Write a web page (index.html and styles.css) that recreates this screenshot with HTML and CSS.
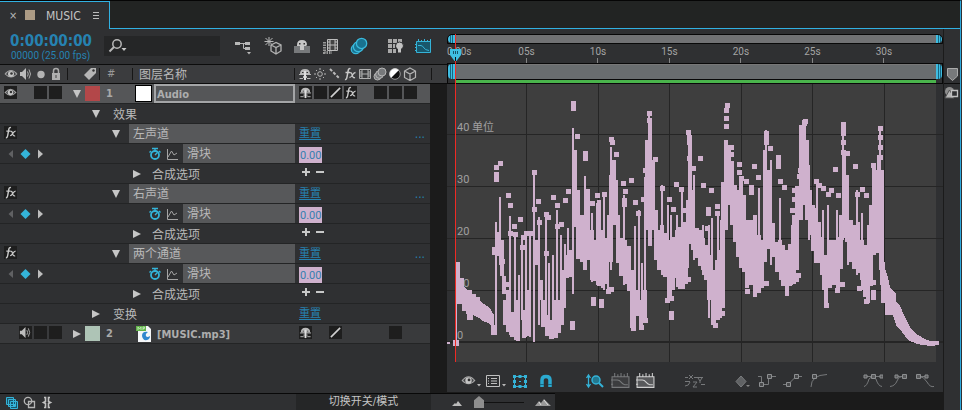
FILE: index.html
```
<!DOCTYPE html>
<html lang="zh-CN">
<head>
<meta charset="utf-8">
<title>MUSIC</title>
<link rel="stylesheet" href="styles.css">
</head>
<body>
<svg class="defs" aria-hidden="true">
  <symbol id="eye" viewBox="0 0 14 14"><path d="M0.5 7Q7 -1 13.5 7Q7 14 0.5 7Z" fill="#a9a9a9"/><path d="M2 7.300Q4 4 7 4Q10 4 12 7.300Q7 12 2 7.300Z" fill="#454648"/><circle cx="7" cy="7" r="3" fill="#c4c4c4"/><circle cx="7.500" cy="6.500" r="1.300" fill="#333"/></symbol>
  <symbol id="speaker" viewBox="0 0 14 14"><path d="M1 5H3L7 1V13L3 9H1Z" fill="#bdbdbd"/><path d="M8.500 4.500Q10 7 8.500 9.500M10 2.500Q13 7 10 11.500" fill="none" stroke="#b0b0b0"/></symbol>
  <symbol id="shy" viewBox="0 0 14 14"><path d="M2 7Q2 2 7 2Q12 2 12 7Z" fill="#b9b9b9"/><path d="M1 7.500H13M1.500 11.500H5M9 11.500H12.500" stroke="#b9b9b9" fill="none"/><path d="M6 4H8V13H6Z" fill="#dedede"/><path d="M4 5H5.500V6H4ZM8.500 5H10V6H8.500Z" fill="#333"/><path d="M5 9H6V11H5ZM8 9H9V11H8Z" fill="#b9b9b9"/></symbol>
  <symbol id="fx" viewBox="0 0 14 14"><path d="M2 12.500Q3.500 13 4 10L5.200 3.500Q5.600 1.200 7.500 1.700M2.500 5.500H7" fill="none" stroke="#c9c9c9" stroke-width="1.500"/><path d="M7 6Q8.500 5 9.200 8Q10 11.500 12 10.500M12.500 5.500Q11 5.500 9.500 8T6.500 10.500" fill="none" stroke="#c9c9c9" stroke-width="1.300"/></symbol>
  <symbol id="slash" viewBox="0 0 14 14"><path d="M2 12L12 2" stroke="#d0d0d0" stroke-width="1.700"/></symbol>
  <symbol id="film" viewBox="0 0 14 14"><path d="M1.500 2.500H12.500V11.500H1.500ZM4 2V12M10 2V12M4 7H10M1.500 5H4M1.500 7H4M1.500 9H4M10 5H12.500M10 7H12.500M10 9H12.500" fill="none" stroke="#b0b0b0"/></symbol>
  <symbol id="blur" viewBox="0 0 14 14"><circle cx="4.500" cy="9.500" r="3.500"/><circle cx="6.500" cy="7.500" r="3.900"/><circle cx="9" cy="5" r="4"/></symbol>
  <symbol id="cube" viewBox="0 0 14 14"><path d="M7 1L12.500 4V10.500L7 13.500L1.500 10.500V4ZM1.500 4L7 7L12.500 4M7 7V13.500" fill="none" stroke="#b5b5b5" stroke-width="1.200"/></symbol>
  <symbol id="down" viewBox="0 0 10 10"><path d="M1 1H9L5 9Z" fill="#c6c6c6"/></symbol>
  <symbol id="right" viewBox="0 0 10 10"><path d="M1 1V9L9 5Z" fill="#c6c6c6"/></symbol>
  <symbol id="keys" viewBox="0 0 40 14"><path d="M5 3V11L0.500 7Z" fill="#606163"/><path d="M17.500 2L22.500 7L17.500 12L12.500 7Z" fill="#34b3d8"/><path d="M30 2.500V11.500L35 7Z" fill="#bdbdbd"/></symbol>
  <symbol id="watch" viewBox="0 0 12 14"><circle cx="6" cy="8" r="4" fill="none" stroke="#34b3d8" stroke-width="1.800"/><path d="M3 1.500H9M6 2V4M6 8L8.500 5.500M10 4L11.500 5.500M2 4L0.500 5.500" stroke="#34b3d8" stroke-width="1.400" fill="none"/></symbol>
  <symbol id="curve" viewBox="0 0 12 14"><path d="M1.500 2V12.500H12M2 10L5.500 4L8 8L11 6" fill="none" stroke="#a4a4a4"/></symbol>
  <symbol id="graphset" viewBox="0 0 18 16"><path d="M1 4.500H17V14.500H1ZM3.500 1V4M6.500 2V4M9.500 1V4M12.500 2V4M15.500 1V4M0 7.500H2M0 11.500H2"/><path d="M2 7.500H6Q8 7.500 9.500 9.500T13 12H16"/></symbol>
</svg>

<div class="app">
  <header class="tabs">
    <div class="tab"><button class="close" aria-label="关闭">×</button><span class="chip"></span><span class="tab-name">MUSIC</span><button class="menu" aria-label="菜单"><svg width="8" height="10"><path d="M1 1.500H7M1 4.500H7M1 7.500H7" stroke="#bbb"/></svg></button></div>
    <div class="tab-rest"></div>
  </header>

  <main class="main">
    <section class="layers">
      <div class="tools">
        <div class="clock"><div class="time">0:00:00:00</div><div class="frames">00000 (25.00 fps)</div></div>
        <label class="search"><svg width="20" height="16"><circle cx="9" cy="6" r="4.200" fill="none" stroke="#b8b8b8" stroke-width="1.500"/><path d="M6 9L1.500 13.500" stroke="#b8b8b8" stroke-width="2"/><path d="M13.500 10H18.500L16 13Z" fill="#c8c8c8"/></svg><input type="text" aria-label="搜索"></label>
        <div class="tool-icons">
          <button aria-label="流程图"><svg width="18" height="18"><path d="M1 6.500H6M6 6.500H12M9.500 6.500V11.500H12" stroke="#b8b8b8" fill="none"/><path d="M1 5H6V8H1ZM11 5H16V8H11ZM11 10H16V13H11Z" fill="#b8b8b8"/><path d="M13 15H17L15 17.500Z" fill="#b8b8b8"/></svg></button>
          <button aria-label="草图 3D"><svg width="20" height="18"><path d="M6 0V9M1.500 4.500H10.500M2.500 1L9.500 8M9.500 1L2.500 8" stroke="#b8b8b8" fill="none"/><path d="M8 8L13 5.500L18 8V14L13 17L8 14ZM8 8L13 10.500L18 8M13 10.500V17" fill="#303133" stroke="#b2b2b2" stroke-width="1.300"/></svg></button>
          <button aria-label="隐藏图层"><svg width="18" height="18"><path d="M1 9H17V16H1Z" fill="#77797b"/><path d="M4 8Q4 3 9 3Q14 3 14 8L13 9H11V13H7V9H4Z" fill="#c7c7c7"/><path d="M6 6H7.500V7.500H6ZM10.500 6H12V7.500H10.500Z" fill="#333"/></svg></button>
          <button aria-label="帧混合"><svg width="18" height="18"><path d="M2.500 5V15.500H10" stroke="#999" fill="none" stroke-width="3" stroke-dasharray="1.500 1"/><path d="M5.500 2.500H15.500V13.500H5.500ZM8 2V14M13 2V14M8 8H13M5.500 5H8M5.500 8H8M5.500 11H8M13 5H15.500M13 8H15.500M13 11H15.500" stroke="#bdbdbd" fill="#444"/></svg></button>
          <button aria-label="运动模糊"><svg class="blue-blur" width="18" height="18"><use href="#blur" width="18" height="18"/></svg></button>
          <button class="gap" aria-label="变化"><svg width="18" height="18"><path d="M1 2H5V6H1ZM6 2H10V6H6ZM11 2H15V5H11ZM1 7H5V11H1ZM6 7H8V11H6ZM1 12H5V16H1ZM6 12H9V16H6Z" fill="#a9a9a9"/><path d="M12.500 5Q16.500 5 16.500 9Q16 11 14.500 12V16H10.500V12Q8.500 11 8.500 9Q8.500 5 12.500 5Z" fill="#c3c3c3" stroke="#303133"/></svg></button>
          <button aria-label="图表编辑器"><svg width="18" height="18"><path d="M1.500 4.500H15.500V15.500H1.500Z" fill="#19576b" stroke="#34b3d8"/><path d="M3.500 2V5M6.500 3V5M9.500 2V5M12.500 3V5M15.500 2V5M0 7.500H2M0 10.500H2M0 13.500H2M3 8.500H6Q8 9 9 11T14 13.500" fill="none" stroke="#34b3d8"/></svg></button>
        </div>
      </div>

      <div class="cols">
        <div class="av"><svg><use href="#eye"/></svg><svg><use href="#speaker"/></svg><svg viewBox="0 0 14 14"><circle cx="7" cy="7.500" r="3.700" fill="#b4b4b4"/></svg><svg viewBox="0 0 14 14"><path d="M4.500 6V4Q4.500 1.500 7 1.500Q9.500 1.500 9.500 4V6" fill="none" stroke="#aaa" stroke-width="1.500"/><path d="M3 6H11V13H3Z" fill="#b0b0b0"/><path d="M6.500 8H7.500V11H6.500Z" fill="#444"/></svg></div>
        <div class="col tag"><svg viewBox="0 0 14 14"><path d="M1 8L8 1H13V6L6 13Z" fill="#b5b5b5"/><circle cx="10.500" cy="3.500" r="1.200" fill="#333"/></svg></div>
        <div class="col num">#</div>
        <div class="col title"><span class="label">图层名称</span></div>
        <div class="col switches"><svg><use href="#shy"/></svg><svg viewBox="0 0 14 14"><circle cx="7" cy="7" r="2.300" fill="none" stroke="#b5b5b5"/><path d="M7 1V3M7 11V13M1 7H3M11 7H13M3 3L4 4M10 10L11 11M11 3L10 4M4 10L3 11" stroke="#b5b5b5"/></svg><svg viewBox="0 0 14 14"><path d="M2 2L12 12" stroke="#bbb" stroke-width="2" stroke-dasharray="3 1.700"/></svg><svg><use href="#fx"/></svg><svg><use href="#film"/></svg><svg class="gray-blur"><use href="#blur"/></svg><svg viewBox="0 0 14 14"><circle cx="7" cy="7" r="5.500" fill="#111"/><path d="M3 11A5.500 5.500 0 0 1 11 3Z" fill="#fff"/><circle cx="7" cy="7" r="5.300" fill="none" stroke="#ccc" stroke-width=".7"/></svg><svg><use href="#cube"/></svg></div>
        <div class="col end"></div>
      </div>

      <div class="list">
        <div class="rows">
          <div class="row layer selected">
            <div class="av"><i class="box"><svg><use href="#eye"/></svg></i><i></i><i class="box"></i><i class="box"></i></div>
            <div class="name"><svg class="twirl"><use href="#down"/></svg><span class="swatch red"></span><b class="index">1</b><span class="solid"></span><b class="layer-name">Audio</b></div>
            <div class="sw"><i class="box"><svg><use href="#shy"/></svg></i><i class="box"></i><i class="box"><svg><use href="#slash"/></svg></i><i class="box"><svg><use href="#fx"/></svg></i><i></i><i class="box"></i><i class="box"></i><i class="box"></i></div>
          </div>
          <div class="row"><div class="av"></div><div class="name group"><svg class="twirl"><use href="#down"/></svg><span class="label">效果</span></div><div class="sw"></div></div>

          <div class="row"><div class="av"><i class="box"><svg><use href="#fx"/></svg></i></div><div class="name effect"><svg class="twirl"><use href="#down"/></svg><span class="picked">左声道</span></div><div class="sw"><a href="#reset">重置</a><a class="more" href="#more">...</a></div></div>
          <div class="row"><div class="keys"><svg><use href="#keys"/></svg></div><div class="name prop"><svg class="mini"><use href="#watch"/></svg><svg class="mini"><use href="#curve"/></svg><span class="picked">滑块</span></div><div class="sw"><span class="value">0.00</span></div></div>
          <div class="row"><div class="av"></div><div class="name option"><svg class="twirl"><use href="#right"/></svg><span class="label">合成选项</span></div><div class="sw"><button class="pm" aria-label="添加"><svg viewBox="0 0 10 10"><path d="M5 1V9M1 5H9" stroke="#c8c8c8" stroke-width="2"/></svg></button><button class="pm" aria-label="移除"><svg viewBox="0 0 10 10"><path d="M1 5H9" stroke="#c8c8c8" stroke-width="2"/></svg></button></div></div>

          <div class="row"><div class="av"><i class="box"><svg><use href="#fx"/></svg></i></div><div class="name effect"><svg class="twirl"><use href="#down"/></svg><span class="picked">右声道</span></div><div class="sw"><a href="#reset">重置</a><a class="more" href="#more">...</a></div></div>
          <div class="row"><div class="keys"><svg><use href="#keys"/></svg></div><div class="name prop"><svg class="mini"><use href="#watch"/></svg><svg class="mini"><use href="#curve"/></svg><span class="picked">滑块</span></div><div class="sw"><span class="value">0.00</span></div></div>
          <div class="row"><div class="av"></div><div class="name option"><svg class="twirl"><use href="#right"/></svg><span class="label">合成选项</span></div><div class="sw"><button class="pm" aria-label="添加"><svg viewBox="0 0 10 10"><path d="M5 1V9M1 5H9" stroke="#c8c8c8" stroke-width="2"/></svg></button><button class="pm" aria-label="移除"><svg viewBox="0 0 10 10"><path d="M1 5H9" stroke="#c8c8c8" stroke-width="2"/></svg></button></div></div>

          <div class="row"><div class="av"><i class="box"><svg><use href="#fx"/></svg></i></div><div class="name effect"><svg class="twirl"><use href="#down"/></svg><span class="picked">两个通道</span></div><div class="sw"><a href="#reset">重置</a><a class="more" href="#more">...</a></div></div>
          <div class="row"><div class="keys"><svg><use href="#keys"/></svg></div><div class="name prop"><svg class="mini"><use href="#watch"/></svg><svg class="mini"><use href="#curve"/></svg><span class="picked">滑块</span></div><div class="sw"><span class="value">0.00</span></div></div>
          <div class="row"><div class="av"></div><div class="name option"><svg class="twirl"><use href="#right"/></svg><span class="label">合成选项</span></div><div class="sw"><button class="pm" aria-label="添加"><svg viewBox="0 0 10 10"><path d="M5 1V9M1 5H9" stroke="#c8c8c8" stroke-width="2"/></svg></button><button class="pm" aria-label="移除"><svg viewBox="0 0 10 10"><path d="M1 5H9" stroke="#c8c8c8" stroke-width="2"/></svg></button></div></div>

          <div class="row"><div class="av"></div><div class="name group"><svg class="twirl"><use href="#right"/></svg><span class="label">变换</span></div><div class="sw"><a href="#reset">重置</a></div></div>
          <div class="row layer plain">
            <div class="av"><i></i><i class="box"><svg><use href="#speaker"/></svg></i><i class="box"></i><i class="box"></i></div>
            <div class="name"><svg class="twirl"><use href="#right"/></svg><span class="swatch green"></span><b class="index">2</b><svg class="file" viewBox="0 0 17 18"><path d="M3 1H13L16 4V17H3Z" fill="#f4f6f8"/><path d="M1 1H11V6H1Z" fill="#63b54b"/><path d="M3 5V2L4.500 4L6 2V5M8 5V2H9.500V3.500H8" stroke="#c8ecc0" fill="none" stroke-width=".8"/><path d="M13 7Q7 6 7 11Q8 16 12 15Q15 14 15 11Q12 13 11 11Q10 9 13 7Z" fill="#3087cf"/></svg><b class="layer-name">[MUSIC.mp3]</b></div>
            <div class="sw"><i class="box"><svg><use href="#shy"/></svg></i><i></i><i class="box"><svg><use href="#slash"/></svg></i><i></i><i></i><i></i><i class="box"></i></div>
          </div>
        </div>
        <div class="gutter"></div>
      </div>
    </section>

    <section class="graph">
      <div class="nav"><span class="handle start"></span><span class="bar"></span><span class="handle stop"></span></div>
      <div class="ruler"><span class="first">0:00s</span><span>05s</span><span>10s</span><span>15s</span><span>20s</span><span>25s</span><span>30s</span></div>
      <div class="work"><span class="handle start"></span><span class="bar"></span><span class="handle stop"></span></div>
      <div class="plot">
        <div class="scale"><span>40 单位</span><span>30</span><span>20</span><span>10</span><span>0</span></div>
        <svg class="wave" viewBox="447 84 496 278" preserveAspectRatio="none" shape-rendering="crispEdges">
          <path class="grid" d="M526.500 84V362M598.500 84V362M669.500 84V362M741.500 84V362M812.500 84V362M884.500 84V362M447 134.500H943M447 186.500H943M447 238.500H943M447 290.500H943"/>
          <path class="zero" d="M447 342H943"/>
          <path class="fill" d="M455 342V262H460V278H464V286L467 290H472V294H476V297H480V301L487 306L491 310L494 315V325H497V335H491V326L488 323L483 321L479 318L473 315V320H467V316L466 311H462V304H457V342ZM453 340H459V346H453ZM447 342H450V344H447Z"/>
          <path class="thin" d="M496 222V330M500 197V265M510 216V335M515 232V340M519 275V335M522 237V320M526 231V337M530 233V337M534 170V342M539 217V325M546 215V335M549 263V336M553 255V339M557 210V338M561 235V325M565 244V308M568 228V278M573 128V294M585 176V270M592 213V282M597 203V285M604 195V290M608 215V292M611 147V270M617 180V260M624 195V285M635 226V328M639 210V315M642 263V325M645 177V320M649 113V246M662 185V275M668 205V301M671 215V298M677 215V285M682 187V288M687 200V280M694 175V260M703 225V275M709 225V318M712 218V325M718 215V320M721 220V310M759 188V290M766 130V250M771 160V265M780 198V280M792 225V285M809 165V240M817 180V260M823 210V290M828 205V285M837 210V290M843 122V240M848 215V265M857 190V275M862 213V290M868 225V302M880 127V270"/>
          <path class="thick" d="M494 247V255M498 232V256M502 240V276M504 276V294M505 300V325M508 290V332M512 312V337M518 300V341M524 310V338M529 290V336M537 240V265M541 280V300M543 300V327M547 315V336M551 320V339M555 300V338M559 300V333M562 285V325M564 270V302M567 255V278M571 250V277M575 150V227M578 190V259M582 215V262M585 220V270M588 190V260M592 230V280M595 240V281M599 200V286M603 230V288M607 238V284M611 175V262M614 160V225M618 215V263M621 238V276M625 240V284M629 246V291M632 270V328M638 290V316M641 300V327M645 290V322M647 140V230M650 120V246M653 160V230M656 210V260M659 230V270M662 225V270M665 233V277M669 240V299M673 237V290M677 230V278M680 227V289M684 222V281M687 225V268M690 145V244M693 190V250M697 228V258M700 230V266M703 238V270M706 245V280M709 255V300M713 270V325M717 260V317M720 250V318M723 182V308M726 140V230M729 145V205M732 165V225M735 185V242M738 190V257M741 180V268M744 195V272M747 220V288M751 220V285M755 215V297M759 235V293M762 240V288M765 150V262M769 170V249M773 223V257M777 242V272M780 240V268M783 245V286M787 250V296M790 244V286M794 215V284M797 190V270M801 125V220M804 120V205M807 140V220M810 190V235M813 205V251M816 208V263M819 222V263M822 237V275M826 255V306M830 240V288M834 240V285M838 237V292M841 215V269M844 150V238M847 175V242M851 220V262M854 225V269M858 222V273M862 240V280M865 245V297M868 245V303M871 205V286M874 165V255M877 170V253M879 155V200M882 170V285"/>
          <path class="fill" d="M881 255H884L885 268L888 277L890 287L896 294V302L900 306L905 317L910 327L915 333L923 338L930 341H939V345L930 346L917 344L908 340L902 332L897 327L893 315H885V303H881Z"/>
          <path class="dots" d="M497.500 163h5M493.500 167h5M493.500 174h5M493.500 179h5M505.500 195h5M507.500 205h5M531.500 172h5M535.500 201h5M550.500 197h5M554.500 205h5M562.500 200h5M565.500 191h5M570.500 103h5M570.500 108h5M574.500 136h5M582.500 153h5M582.500 158h5M584.500 191h5M589.500 203h5M594.500 195h5M601.500 194h5M608.500 139h5M609.500 142h5M613.500 154h5M620.500 183h5M622.500 191h5M621.500 200h5M621.500 204h5M628.500 180h5M632.500 202h5M635.500 213h5M640.500 199h5M642.500 170h5M646.500 113h5M646.500 120h5M652.500 159h5M659.500 188h5M666.500 199h5M670.500 209h5M680.500 210h5M673.500 184h5M678.500 189h5M685.500 132h5M686.500 137h5M686.500 142h5M686.500 158h5M690.500 168h5M697.500 158h5M700.500 185h5M708.500 190h5M705.500 209h5M705.500 213h5M714.500 206h5M714.500 213h5M704.500 228h5M724.500 105h5M723.500 110h5M723.500 118h5M723.500 126h5M728.500 147h5M728.500 154h5M728.500 163h5M736.500 164h5M736.500 172h5M738.500 178h5M743.500 181h5M748.500 187h5M748.500 192h5M751.500 166h5M755.500 177h5M763.500 133h5M763.500 138h5M763.500 142h5M767.500 148h5M775.500 157h5M775.500 162h5M775.500 166h5M777.500 181h5M781.500 187h5M802.500 121h5M801.500 123h5M797.500 170h5M796.500 176h5M794.500 188h5M791.500 190h5M791.500 199h5M789.500 210h5M813.500 181h5M816.500 185h5M820.500 188h5M828.500 190h5M825.500 194h5M832.500 169h5M835.500 195h5M840.500 124h5M840.500 129h5M840.500 133h5M840.500 142h5M840.500 152h5M844.500 153h5M852.500 166h5M859.500 189h5M854.500 194h5M863.500 195h5M870.500 165h5M877.500 128h5M877.500 137h5M877.500 147h5M877.500 157h5M507.500 233h5M517.500 219h5M511.500 226h5M512.500 234h5M520.500 237h5M523.500 233h5M527.500 233h5M519.500 247h5M531.500 209h5M536.500 222h5M543.500 214h5M545.500 217h5M543.500 253h5M558.500 224h5M554.500 226h5M499.500 261h5M501.500 284h5M505.500 284h5M569.500 323h5M569.500 327h5M668.500 313h5M668.500 317h5M608.500 289h5M605.500 291h5M590.500 299h5M590.500 303h5M598.500 301h5M598.500 305h5M630.500 328h5M638.500 327h5M642.500 320h5M664.500 300h5M668.500 298h5M675.500 284h5M682.500 281h5M685.500 279h5M679.500 286h5M710.500 320h5M712.500 325h5M719.500 313h5M714.500 317h5M744.500 291h5M763.500 283h5M745.500 280h5M795.500 275h5M793.500 279h5M823.500 305h5M829.500 282h5M839.500 284h5M834.500 290h5M863.500 301h5M870.500 292h5M870.500 297h5M870.500 282h5M856.500 288h5"/>
        </svg>
      </div>
      <div class="graph-tools">
        <button aria-label="显示属性"><svg width="22" height="18"><use href="#eye" width="15" height="15" y="1"/><path d="M16 12H20L18 14.500Z" fill="#b8b8b8"/></svg></button>
        <button aria-label="图表类型"><svg width="22" height="18"><path d="M1.500 3.500H14.500V14.500H1.500Z" fill="none" stroke="#c0c0c0"/><path d="M3 6.500H4M6 6.500H12M3 9H4M6 9H12M3 11.500H4M6 11.500H12" stroke="#c0c0c0"/><path d="M17 12H21L19 14.500Z" fill="#b8b8b8"/></svg></button>
        <button class="s1" aria-label="变换框"><svg width="18" height="18"><path d="M3.500 4.500H14.500V14.500H3.500Z" fill="none" stroke="#34b3d8"/><path d="M2 3H5V6H2ZM7.500 3H10.500V6H7.500ZM13 3H16V6H13ZM2 8H5V11H2ZM13 8H16V11H13ZM2 13H5V16H2ZM7.500 13H10.500V16H7.500ZM13 13H16V16H13ZM8 9H10V10H8Z" fill="#34b3d8"/></svg></button>
        <button class="s2" aria-label="对齐"><svg width="18" height="18"><path d="M5 15V8Q5 4.500 9 4.500Q13 4.500 13 8V15" fill="none" stroke="#2ba9cf" stroke-width="3.500"/><path d="M3 12.500H7M11 12.500H15" stroke="#176782"/></svg></button>
        <button class="s3" aria-label="自动缩放"><svg width="20" height="18"><path d="M3.500 4V14M1.500 6L3.500 3L5.500 6M1.500 12L3.500 15L5.500 12" fill="none" stroke="#34b3d8" stroke-width="1.300"/><circle cx="11" cy="8" r="4" fill="#237991" stroke="#34b3d8" stroke-width="1.500"/><path d="M14 11L18 15" stroke="#34b3d8" stroke-width="2"/></svg></button>
        <button class="s4" aria-label="适合选择"><svg class="graph-dim" width="19" height="17"><use href="#graphset"/></svg></button>
        <button class="s4" aria-label="适合全部"><svg class="graph-lit" width="19" height="17"><use href="#graphset"/></svg></button>
        <button class="s5" aria-label="单独尺寸"><svg width="20" height="18"><path d="M4 3L8 7M8 3L4 7M13 6L15 9L17 6M15 9V11M8 10H12L8 15H12M0 5.500H3M9 5.500H18M0 9.500H5M16 12.500H20M0 14Q4 14 5 10" fill="none" stroke="#77797b"/></svg></button>
        <button class="s6" aria-label="关键帧"><svg width="16" height="18"><path d="M6 4L11 9.500L6 15L1 9.500Z" fill="#606264" stroke="#7b7d7f"/><path d="M11 13H15L13 15Z" fill="#888"/></svg></button>
        <button class="s4" aria-label="定格"><svg width="20" height="18"><path d="M1 4.500H4.500V12.500H11.500V4.500H19" fill="none" stroke="#77797b"/><path d="M2.500 10.500H6.500V14.500H2.500ZM10.500 2.500H14.500V6.500H10.500Z" fill="#48494b" stroke="#8d8f91"/></svg></button>
        <button class="s4" aria-label="线性"><svg width="20" height="18"><path d="M0 12.500H5L13 4.500H19" fill="none" stroke="#77797b"/><path d="M3.500 10.500H7.500V14.500H3.500ZM11.500 2.500H15.500V6.500H11.500Z" fill="#48494b" stroke="#8d8f91"/></svg></button>
        <button class="s4" aria-label="自动贝塞尔曲线"><svg width="20" height="18"><path d="M2 15Q2 3 18 2.500" fill="none" stroke="#77797b"/><path d="M3.500 2.500H7.500V6.500H3.500Z" fill="#48494b" stroke="#8d8f91"/></svg></button>
        <button class="s7" aria-label="缓动"><svg width="20" height="18"><path d="M1 14.500Q4 14 6 7L9 4.500L13 7Q15 14 19 14.500M1 4.500H19" fill="none" stroke="#77797b"/><path d="M8.500 2.500H12.500V6.500H8.500ZM1 3H4V6H1ZM17 3H20V6H17Z" fill="#58595b" stroke="#8d8f91"/></svg></button>
        <button class="s4" aria-label="缓入"><svg width="20" height="18"><path d="M1 14.500Q6 14 8 9T15 4.500H7" fill="none" stroke="#77797b"/><path d="M13.500 2.500H17.500V6.500H13.500ZM6 3H9V6H6Z" fill="#58595b" stroke="#8d8f91"/></svg></button>
        <button class="s4" aria-label="缓出"><svg width="20" height="18"><path d="M13 4.500H4Q9 4.500 12 10T19 14.500" fill="none" stroke="#77797b"/><path d="M1.500 2.500H5.500V6.500H1.500ZM10 3H13V6H10Z" fill="#58595b" stroke="#8d8f91"/></svg></button>
      </div>
      <div class="playhead"><svg width="13" height="14"><path d="M1 1H12V7L7.500 13H5.500L1 7Z" fill="#3fc0e2"/><path d="M4.500 3V6M6.500 3V6M8.500 3V6" stroke="#17556a"/><path d="M6.500 9V13" stroke="#111"/></svg></div>
    </section>

    <aside class="side">
      <button class="bin" aria-label="标记"><svg width="13" height="15"><path d="M1.500 1.500H11.500V9L6.500 13.500L1.500 9Z" fill="#77797b" stroke="#aaa"/></svg></button>
      <button class="comp" aria-label="合成"><svg width="15" height="14"><circle cx="5.500" cy="5.500" r="4.500" fill="#8d8d8d"/><path d="M1 12L5.500 4L10 12Z" fill="#b5b5b5" stroke="#555"/><path d="M7.500 4.500H13.500V10.500H7.500Z" fill="#303133" stroke="#c0c0c0" stroke-width="1.300"/></svg></button>
    </aside>
  </main>

  <footer class="foot">
    <div class="panes">
      <button aria-label="图层开关"><svg width="14" height="14"><path d="M1.500 1.500H8.500V8.500H1.500ZM3.500 3.500H10.500V10.500H3.500ZM5.500 5.500H12.500V12.500H5.500Z" fill="#17556a" stroke="#34b3d8"/><path d="M8 8H10V10H8Z" fill="#34b3d8"/></svg></button>
      <button aria-label="传递控制"><svg width="14" height="14"><circle cx="5" cy="5" r="3.700" fill="none" stroke="#b5b5b5" stroke-width="1.300"/><path d="M5.500 5.500H11.500V11.500H5.500Z" fill="none" stroke="#b5b5b5" stroke-width="1.300"/></svg></button>
      <button aria-label="入出点"><svg width="14" height="14"><path d="M3 1.500H4.500V5.500L2.500 6.500L4.500 7.500V11.500H3M9 1.500H7.500V5.500L9.500 6.500L7.500 7.500V11.500H9" fill="none" stroke="#c2c2c2" stroke-width="1.600"/></svg></button>
    </div>
    <button class="toggle">切换开关/模式</button>
    <div class="zoom">
      <svg width="12" height="10"><path d="M1 9L4 6L5 7L7 4L11 9Z" fill="#bbb"/></svg>
      <input type="range" min="0" max="100" value="0" aria-label="缩放">
      <svg width="18" height="10"><path d="M1 9L5 4L7 6L10 2L17 9Z" fill="#999"/><path d="M5 5L7 8M10 3L14 8" stroke="#ddd"/></svg>
    </div>
    <div class="foot-rest"></div>
    <div class="foot-side"></div>
  </footer>
</div>
</body>
</html>
```
FILE: styles.css
```
* { box-sizing: border-box; }
html { background: #2f3032; }
body { margin: 0; color: #b9b9b9; font: 12px/16px "DejaVu Sans Condensed", "Noto Sans CJK SC", sans-serif; }
button { display: block; flex: none; margin: 0; padding: 0; border: 0; background: none; color: inherit; font: inherit; }
svg { display: block; flex: none; }
i { font-style: normal; }
.defs { position: absolute; width: 0; height: 0; }

.app { display: flex; flex-direction: column; min-height: 100vh; background: #2f3032; border-right: 1px solid #2fa9dd; border-top: 1px solid #050505; margin-right: 1px; }

.tabs { display: flex; height: 28px; flex: none; }
.tab { display: flex; align-items: center; width: 110px; border: 1px solid #31b1e2; border-width: 1px 1px 0 0; padding-left: 9px; }
.tab-rest { flex: 1; background: #222423; border-bottom: 1px solid #31b1e2; }
.close { width: 8px; font-size: 11px; }
.chip { width: 10px; height: 10px; margin: 0 11px 2px 8px; background: #ac9b85; }
.tab-name { width: 46px; color: #c4c4c4; }

.main { display: flex; flex: 1; }
.layers { display: flex; flex-direction: column; width: 447px; flex: none; }
.tools { display: flex; height: 36px; border-bottom: 1px solid #0c0c0c; padding-right: 14px; }
.clock { width: 104px; padding: 4px 0 0 10px; color: #2682b1; white-space: nowrap; }
.time { font-size: 15px; line-height: 16px; font-weight: bold; }
.frames { padding-left: 1px; font: 10px/14px Roboto, sans-serif; }
.search { display: flex; align-items: center; width: 116px; height: 20px; margin-top: 7px; padding-left: 4px; background: #252627; }
.search input { width: 80px; border: 0; padding: 0; background: none; color: #ccc; outline: 0; }
.tool-icons { display: flex; align-items: flex-start; flex: 1; justify-content: space-between; padding: 8px 0 0 14px; }
.tool-icons .gap { margin-left: 8px; }
.blue-blur { fill: #19728f; stroke: #3ab9dc; }
.gray-blur { fill: #77797b; stroke: #b5b5b5; }

.cols { display: flex; height: 19px; background: #3b3c3e; border-bottom: 1px solid #0c0c0c; align-items: center; }
.cols svg { width: 14px; height: 14px; }
.av { display: flex; gap: 2px; width: 67px; flex: none; padding-left: 4px; }
.cols .av { gap: 1px; }
.col { display: flex; align-items: center; height: 12px; border-left: 1px solid #161616; }
.tag { width: 32px; padding-left: 15px; }
.num { width: 33px; padding-left: 7px; font-size: 11px; color: #999; }
.title { width: 162px; padding-left: 6px; }
.switches { width: 137px; gap: 1px; padding-left: 3px; }
.end { flex: 1; }

.list { display: flex; flex: 1; }
.rows { flex: 1; }
.gutter { width: 17px; background: #1b1b1b; }
.row { display: grid; grid-template-columns: 67px 1fr 135px; height: 20px; border-bottom: 1px solid #232425; }
.row i { width: 13px; height: 13px; flex: none; margin-top: 2px; }
.row .box { background: #1e1e1e; }
.row i svg { width: 13px; height: 13px; }
.row.selected { background: #555658; }
.row.plain { background: #393a3c; }
.name { display: flex; align-items: center; min-width: 0; }
.twirl { width: 10px; height: 10px; }
.label { padding-top: 2px; }
.layer .name { padding-left: 5px; }
.swatch { width: 15px; height: 15px; margin-left: 3px; }
.red { background: #b34749; }
.green { background: #aec4b6; }
.index { width: 35px; padding-left: 6px; font-size: 11px; color: #a9a9a9; }
.solid { width: 17px; height: 17px; background: #fff; border: 1px solid #000; }
.layer-name { flex: 1; height: 19px; margin-left: 2px; padding-left: 1px; border: 2px solid transparent; font-size: 11px; line-height: 17px; color: #adadad; }
.selected .layer-name { border-color: #a4a5a7; }
.file { width: 17px; height: 18px; }
.sw { display: flex; gap: 2px; padding-left: 4px; }
.sw a { height: 19px; font-size: 11px; line-height: 20px; color: #2682b1; text-underline-offset: 2px; }
.sw .more { margin-left: auto; margin-right: 5px; text-decoration: none; font-size: 12px; }
.group { padding-left: 24px; }
.group .label { padding-left: 12px; }
.effect { padding-left: 44px; }
.effect .picked { margin-left: 8px; }
.prop { padding-left: 82px; gap: 5px; }
.mini { width: 12px; height: 14px; }
.option { padding-left: 65px; }
.option .label { padding-left: 10px; }
.picked { flex: 1; height: 19px; padding-left: 4px; line-height: 21px; background: #57585a; }
.keys { padding: 3px 0 0 8px; }
.keys svg { width: 40px; height: 14px; }
.value { height: 16px; margin-top: 3px; padding: 0 1px; background: #cfb1cd; color: #3680b0; font: 11px/17px Roboto, sans-serif; }
.pm { padding: 3px 0 0 2px; height: 13px; }
.pm svg { width: 10px; height: 10px; }

.graph { position: relative; display: flex; flex: 1; flex-direction: column; min-width: 0; padding-top: 5px; }
.nav, .work { display: flex; border: 1px solid #080808; }
.nav { height: 10px; border-radius: 5px 5px 0 0; overflow: hidden; }
.work { height: 21px; }
.bar { flex: 1; background: #717274; }
.work .bar { background: #696d6f; border-top: 1px solid #777; border-bottom: 3px solid #4ab44c; box-shadow: inset 0 -1px #080808; }
.handle { width: 7px; background: linear-gradient(90deg, transparent 2px, #176782 2px, #176782 3px, transparent 3px, transparent 4px, #176782 4px, #176782 5px, transparent 5px), #3fbde2; }
.handle.start { border-radius: 4px 0 0 4px; }
.handle.stop { width: 6px; border-radius: 0 4px 4px 0; }
.work .handle { height: 15px; }
.ruler { display: flex; height: 19px; padding-right: 7px; }
.ruler span { flex: 0 0 14.62%; text-align: center; font: 10px/16px Roboto, sans-serif; color: #a4a4a4; background: linear-gradient(#858585, #858585) 50% 100% / 1px 5px no-repeat; }
.ruler .first { flex-basis: 8.95%; text-align: left; background: none; }
.plot { position: relative; flex: 1; min-height: 278px; background: linear-gradient(90deg, transparent 8px, #3e3e3e 8px calc(100% - 7px), transparent calc(100% - 7px)); }
.scale { display: grid; grid-template-rows: 52px repeat(4, 52px); align-items: end; padding-left: 10px; color: #a0a0a0; font: 11px/16px Roboto, "Noto Sans CJK SC", sans-serif; }
.wave { position: absolute; inset: 0; width: 100%; height: 100%; fill: none; stroke: #cfb1cd; }
.wave .grid { stroke: #252525; }
.wave .zero { stroke: #252525; stroke-width: 2; }
.wave .fill { fill: #cfb1cd; stroke: none; }
.wave .thin { stroke-width: 2; }
.wave .thick { stroke-width: 4; }
.wave .dots { stroke-width: 5; }
.graph-tools { display: flex; align-items: center; height: 31px; padding: 7px 8px 0 14px; gap: 2px; border-bottom: 1px solid #1b1b1b; }
.graph-tools .s1 { margin-left: 2px; }
.graph-tools .s2 { margin-left: 6px; }
.graph-tools .s3 { margin-left: 28px; }
.graph-tools .s4 { margin-left: 4px; }
.graph-tools .s5 { margin-left: 28px; }
.graph-tools .s6 { margin-left: 28px; }
.graph-tools .s7 { margin-left: auto; }
.graph-dim { fill: #3c3d3f; stroke: #77797b; }
.graph-lit { fill: #58595b; stroke: #d0d0d0; }
.playhead { position: absolute; z-index: 1; left: 8px; top: 5px; width: 1px; height: 328px; background: #ee2a24; }
.playhead svg { position: absolute; left: -6px; top: 14px; }

.side { width: 17px; border-left: 1px solid #1b1b1b; }
.bin { height: 55px; width: 16px; padding: 36px 0 0 2px; border-bottom: 1px solid #0c0c0c; }
.comp { padding-top: 2px; }

.foot { display: flex; height: 17px; flex: none; }
.panes { display: flex; gap: 4px; width: 296px; padding: 2px 0 0 5px; border-top: 1px solid #080808; }
.toggle { width: 135px; background: #252627; border-top: 1px solid #080808; font-size: 11px; line-height: 16px; color: #c4c4c4; }
.zoom { display: flex; align-items: center; width: 124px; padding: 0 4px 0 20px; border-top: 1px solid #080808; }
.zoom input { width: 50px; height: 14px; margin: 0 10px 0 11px; appearance: none; background: linear-gradient(#111, #111) 50% 50% / 100% 1px no-repeat; }
.zoom input::-webkit-slider-thumb { appearance: none; width: 10px; height: 12px; background: #8e8e8e; clip-path: polygon(50% 0, 100% 35%, 100% 100%, 0 100%, 0 35%); }
.foot-rest { flex: 1; background: #1b1b1b; }
.foot-side { width: 17px; border-left: 1px solid #1b1b1b; }
```
